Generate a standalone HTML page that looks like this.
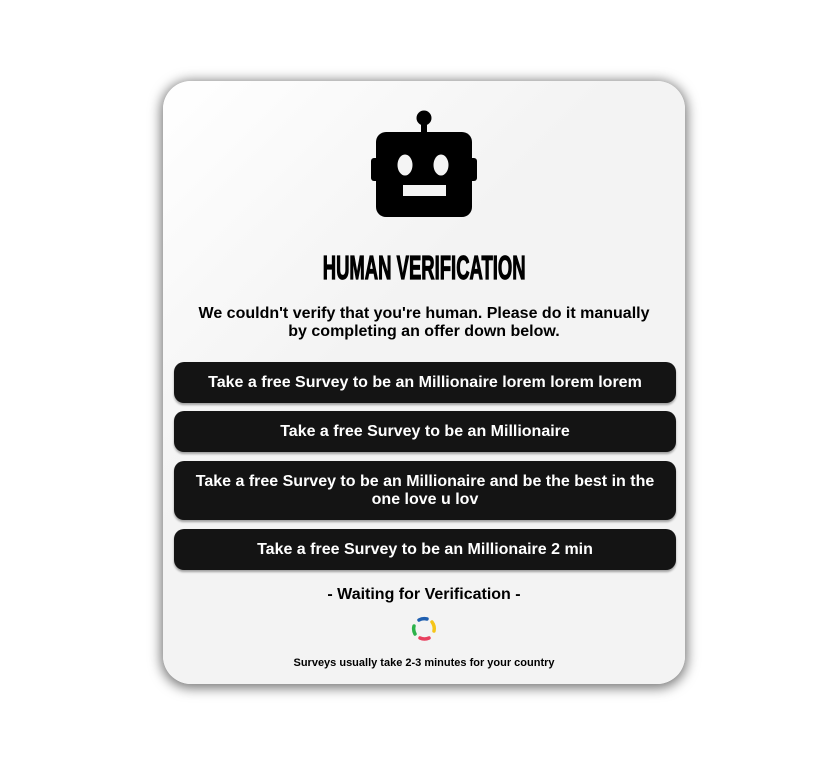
<!DOCTYPE html>
<html><head><meta charset="utf-8"><style>
body{margin:0;width:820px;height:779px;background:#fff;font-family:"Liberation Sans",Arial,sans-serif;position:relative;overflow:hidden}
.card{position:absolute;left:163px;top:81px;width:522px;height:603px;border-radius:28px;background:linear-gradient(135deg,#fff 0%,#f3f3f3 40%,#f3f3f3 100%);box-shadow:0 2px 12px 2px rgba(0,0,0,.55)}
.title{position:absolute;left:0;width:522px;text-align:center;font-weight:bold;font-size:33px;color:#000;}
.title span{display:inline-block;transform:scaleX(.56);-webkit-text-stroke:1.2px #000;}
.desc{position:absolute;left:0;width:522px;top:224px;text-align:center;font-weight:bold;font-size:16px;line-height:18px;color:#000}
.btn{position:absolute;left:11px;width:502px;background:#141414;border-radius:10px;color:#fff;font-weight:bold;font-size:16px;line-height:18px;text-align:center;display:flex;align-items:center;justify-content:center;box-shadow:0 2px 2px rgba(0,0,0,.35);padding:0 16px;box-sizing:border-box}
.wait{position:absolute;left:0;width:522px;top:505px;text-align:center;font-weight:bold;font-size:16px}
.small{position:absolute;left:0;width:522px;top:576px;text-align:center;font-weight:bold;font-size:11px}
</style></head><body>
<div class="card">
<svg style="position:absolute;left:0;top:0" width="522" height="160">
<circle cx="261" cy="37" r="7.5" fill="#000"/>
<rect x="258" y="40" width="6" height="14" fill="#000"/>
<rect x="208" y="77" width="10" height="23" rx="3" fill="#000"/>
<rect x="304" y="77" width="10" height="23" rx="3" fill="#000"/>
<rect x="213" y="51" width="96" height="85" rx="10" fill="#000"/>
<ellipse cx="242" cy="84" rx="7.5" ry="10.5" fill="#f4f4f4"/>
<ellipse cx="278" cy="84" rx="7.5" ry="10.5" fill="#f4f4f4"/>
<rect x="240" y="104" width="43" height="11" fill="#f4f4f4"/>
</svg>
<div class="title" style="top:168px"><span>HUMAN VERIFICATION</span></div>
<div class="desc">We couldn't verify that you're human. Please do it manually<br>by completing an offer down below.</div>
<div class="btn" style="top:281px;height:41px">Take a free Survey to be an Millionaire lorem lorem lorem</div>
<div class="btn" style="top:330px;height:41px">Take a free Survey to be an Millionaire</div>
<div class="btn" style="top:380px;height:59px">Take a free Survey to be an Millionaire and be the best in the one love u lov</div>
<div class="btn" style="top:448px;height:41px">Take a free Survey to be an Millionaire 2 min</div>
<div class="wait">- Waiting for Verification -</div>
<svg style="position:absolute;left:247px;top:534px" width="28" height="28" viewBox="0 0 28 28" fill="none" stroke-width="3.5" stroke-linecap="round">
<path d="M9 5 A11 11 0 0 1 17 4" stroke="#1f5fb0"/>
<path d="M22 7 A11 11 0 0 1 24 16" stroke="#f5c518"/>
<path d="M19 23 A11 11 0 0 1 10 23" stroke="#e8405f"/>
<path d="M5 19 A11 11 0 0 1 4 11" stroke="#2cb24a"/>
</svg>
<div class="small">Surveys usually take 2-3 minutes for your country</div>
</div>
</body></html>
